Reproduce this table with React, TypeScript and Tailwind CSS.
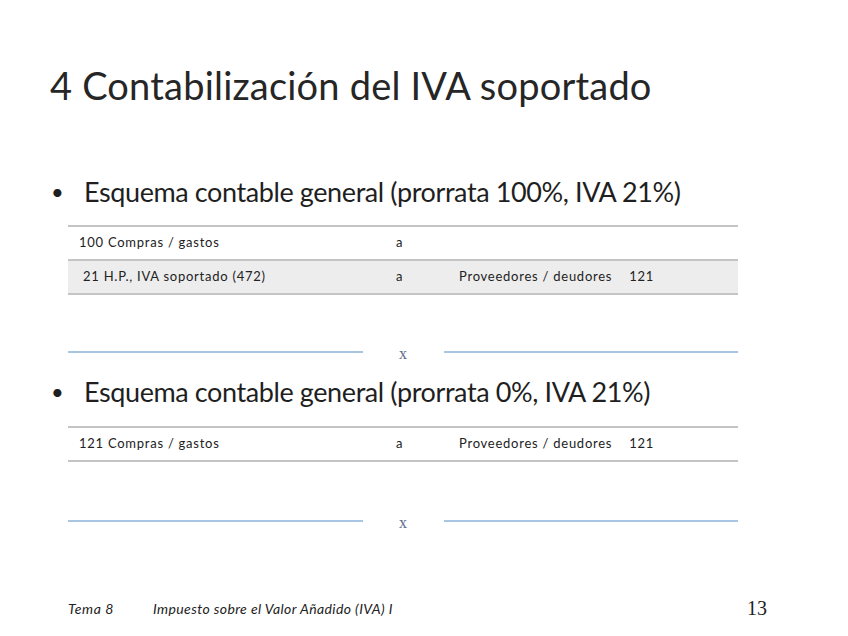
import React from 'react';

const Separator: React.FC<{ className?: string }> = ({ className }) => (
  <div className={`ml-[68px] w-[670px] h-[20px] flex items-center ${className ?? ''}`}>
    <div className="flex-1 h-[2px] bg-[#a9c5e4]" />
    <div className="w-[81px] pt-[3px] text-center text-[16px] leading-[20px] text-[#58698a] font-['Liberation_Serif',serif]">x</div>
    <div className="flex-1 h-[2px] bg-[#a9c5e4]" />
  </div>
);

const Bullet: React.FC<{ children: React.ReactNode; className?: string }> = ({ children, className }) => (
  <div className={`flex h-[36px] leading-[36px] text-[27px] tracking-[-0.4px] text-[#1f1f1f] ${className ?? ''}`}>
    <span className="w-[34px] pl-[1px] text-[22px]">•</span>
    <span>{children}</span>
  </div>
);

const Row: React.FC<{ a: string; b?: string; c?: string; num?: string; shaded?: boolean; indent?: boolean }> = ({ a, b, c, num, shaded, indent }) => (
  <div className={`grid grid-cols-[318px_63px_1fr] h-[32px] items-center text-[13px] tracking-[0.75px] text-[#222] ${shaded ? 'bg-[#ededed]' : ''}`}>
    <div className={indent ? 'pl-[15px]' : 'pl-[11px]'}>{a}</div>
    <div className="pl-[10px]">{b}</div>
    <div className="pl-[10px] flex">
      {c && <span>{c}</span>}
      {num && <span className="ml-[17px]">{num}</span>}
    </div>
  </div>
);

export default function App() {
  return (
    <div className="w-[848px] h-[636px] bg-white overflow-hidden font-['Lato',sans-serif] pt-[60px]">
      <h1 className="pl-[50px] h-[50px] leading-[50px] text-[38px] font-normal text-[#262626] tracking-[0.2px]">
        4 Contabilización del IVA soportado
      </h1>

      <Bullet className="mt-[64px] pl-[50px]">Esquema contable general (prorrata 100%, IVA 21%)</Bullet>

      <div className="mt-[15px] ml-[68px] w-[670px] border-t-2 border-b-2 border-[#c4c4c4]">
        <Row a="100 Compras / gastos" b="a" />
        <div className="border-t-2 border-[#c4c4c4]">
          <Row a="21  H.P., IVA soportado (472)" b="a" c="Proveedores / deudores" num="121" shaded indent />
        </div>
      </div>

      <Separator className="mt-[47px]" />

      <Bullet className="mt-[12px] pl-[50px]">Esquema contable general (prorrata 0%, IVA 21%)</Bullet>

      <div className="mt-[16px] ml-[68px] w-[670px] border-t-2 border-b-2 border-[#c4c4c4]">
        <Row a="121 Compras / gastos" b="a" c="Proveedores / deudores" num="121" />
      </div>

      <Separator className="mt-[49px]" />

      <div className="mt-[64px] h-[24px] flex items-end text-[#222]">
        <span className="ml-[68px] w-[85px] italic text-[14px] tracking-[0.6px] leading-[20px]">Tema 8</span>
        <span className="italic text-[14px] tracking-[0.4px] leading-[20px]">Impuesto sobre el Valor Añadido (IVA) I</span>
        <span className="ml-auto mr-[81px] text-[20px] leading-[22px] font-['Liberation_Serif',serif]">13</span>
      </div>
    </div>
  );
}
